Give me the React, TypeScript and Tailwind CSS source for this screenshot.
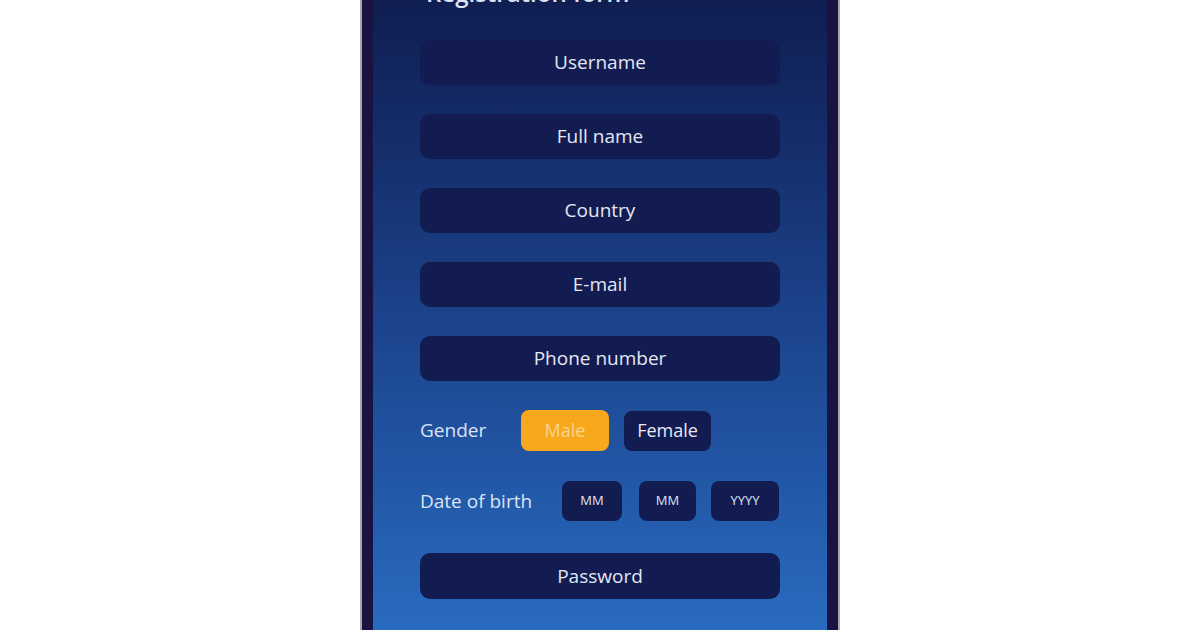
export default function App() {
  const fields = ["Username", "Full name", "Country", "E-mail", "Phone number"];

  return (
    <div
      className="w-[1200px] h-[630px] overflow-hidden bg-white"
      style={{ fontFamily: '"Open Sans", "Noto Sans", sans-serif' }}
    >
      {/* phone frame, top and bottom run past the picture */}
      <div className="mx-auto w-[480px] h-[760px] -mt-[60px] rounded-[28px] border-[2px] border-[#a7a4b4] bg-[#1a1342] px-[11px] pt-[10px]">
        <div className="h-full rounded-[16px] bg-gradient-to-b from-[#0f1c4f] from-[5%] via-[#1a3f86] via-[45%] to-[#2c74cc] px-[47px]">
          <h1 className="pt-[29px] h-[58px] pl-[6px] text-[24px] font-semibold leading-none text-[#dfe4f3]">
            Registration form
          </h1>

          <div className="mt-[30px] flex flex-col gap-[29px]">
            {fields.map((f) => (
              <div
                key={f}
                className="h-[45px] rounded-[10px] bg-[#121c51] flex items-center justify-center text-[19px] font-medium text-[#e3e7f4]"
              >
                {f}
              </div>
            ))}
          </div>

          {/* gender */}
          <div className="mt-[29px] flex items-center h-[41px]">
            <span className="w-[101px] text-[19px] font-medium text-[#dbe4f6]">Gender</span>
            <div className="w-[88px] h-[41px] rounded-[8px] bg-[#f7a81c] flex items-center justify-center text-[18px] font-medium text-[#fbd58c]">
              Male
            </div>
            <div className="ml-[15px] w-[87px] h-[40px] rounded-[8px] bg-[#121c51] flex items-center justify-center text-[18px] font-medium text-[#e8e9f5]">
              Female
            </div>
          </div>

          {/* date of birth */}
          <div className="mt-[30px] flex items-center h-[40px]">
            <span className="w-[142px] text-[19px] font-medium text-[#dbe4f6]">Date of birth</span>
            <div className="w-[60px] h-[40px] rounded-[8px] bg-[#121c51] flex items-center justify-center text-[13px] font-medium text-[#dfe3f1]">
              MM
            </div>
            <div className="ml-[17px] w-[57px] h-[40px] rounded-[8px] bg-[#121c51] flex items-center justify-center text-[13px] font-medium text-[#dfe3f1]">
              MM
            </div>
            <div className="ml-[15px] w-[68px] h-[40px] rounded-[8px] bg-[#121c51] flex items-center justify-center text-[13px] font-medium text-[#dfe3f1]">
              YYYY
            </div>
          </div>

          <div className="mt-[32px] h-[46px] rounded-[10px] bg-[#121c51] flex items-center justify-center text-[19px] font-medium text-[#e3e7f4]">
            Password
          </div>
        </div>
      </div>
    </div>
  );
}
